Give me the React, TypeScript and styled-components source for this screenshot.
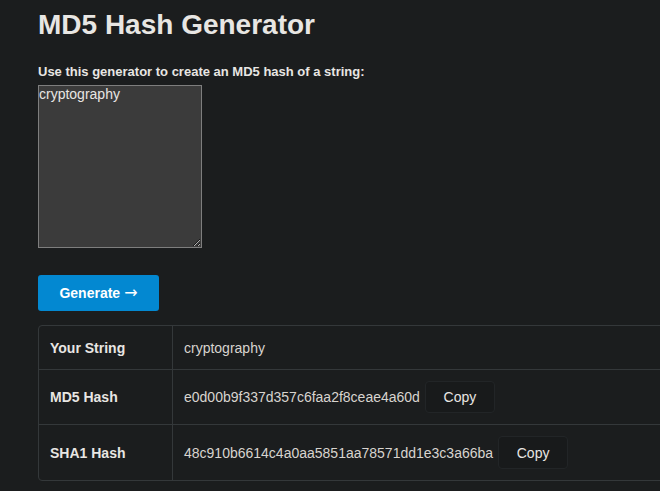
import React from "react";
import styled, { createGlobalStyle } from "styled-components";

const Global = createGlobalStyle`
  html, body {
    margin: 0;
    padding: 0;
    background: #1b1d1e;
    color: #e8e6e3;
    font-family: "Liberation Sans", Arial, Helvetica, sans-serif;
    overflow: hidden;
  }
`;

const Page = styled.main`
  padding: 0 0 0 38px;
  overflow: hidden;
  height: 491px;
`;

const Title = styled.h1`
  margin: 9px 0 0;
  font-size: 28px;
  line-height: 32px;
  font-weight: 700;
  color: #e8e6e3;
`;

const Label = styled.label`
  display: block;
  margin-top: 23px;
  font-size: 13px;
  line-height: 15px;
  font-weight: 700;
  color: #e8e6e3;
`;

const Input = styled.textarea`
  display: block;
  box-sizing: border-box;
  margin-top: 6px;
  width: 164px;
  height: 163px;
  padding: 0;
  background: #3b3b3b;
  border: 1px solid #7e7e7e;
  border-radius: 0;
  color: #e8e6e3;
  font-family: "Liberation Sans", Arial, sans-serif;
  font-size: 14px;
  line-height: 16px;
  outline: none;
`;

const GenerateButton = styled.button`
  display: flex;
  align-items: center;
  justify-content: center;
  gap: 4px;
  box-sizing: border-box;
  margin-top: 27px;
  width: 121px;
  height: 36px;
  padding: 0;
  background: #0388d1;
  color: #ffffff;
  border: none;
  border-radius: 3px;
  font-family: "Liberation Sans", Arial, sans-serif;
  font-size: 14px;
  font-weight: 700;
`;

const Arrow = styled.span`
  font-family: "DejaVu Sans", sans-serif;
  font-weight: 400;
  font-size: 16px;
  line-height: 1;
`;

const Table = styled.table`
  margin-top: 14px;
  width: 660px;
  border-collapse: separate;
  border-spacing: 0;
  border: 1px solid #34383a;
  border-radius: 4px;
  font-size: 14px;
`;

const Head = styled.th<{ $h: number; $first?: boolean }>`
  box-sizing: border-box;
  width: 134px;
  text-align: left;
  font-weight: 700;
  padding: 0 12px 0 11px;
  height: ${(p) => p.$h}px;
  border-right: 1px solid #34383a;
  border-top: ${(p) => (p.$first ? "none" : "1px solid #34383a")};
  color: #e8e6e3;
`;

const Cell = styled.td<{ $first?: boolean }>`
  padding: 0 11px;
  border-top: ${(p) => (p.$first ? "none" : "1px solid #34383a")};
  color: #d8d4cf;
`;

const CellInner = styled.div`
  display: flex;
  align-items: center;
  gap: 5px;
`;

const CopyButton = styled.button<{ $h: number }>`
  box-sizing: border-box;
  height: ${(p) => p.$h}px;
  width: 70px;
  background: #181a1b;
  border: 1px solid #222527;
  border-radius: 4px;
  color: #e8e6e3;
  font-family: "Liberation Sans", Arial, sans-serif;
  font-size: 14px;
  padding: 0;
`;

export default function App() {
  return (
    <>
      <Global />
      <Page>
        <Title>MD5 Hash Generator</Title>
        <Label htmlFor="src">Use this generator to create an MD5 hash of a string:</Label>
        <Input id="src" defaultValue="cryptography" />
        <GenerateButton>
          Generate <Arrow>→</Arrow>
        </GenerateButton>
        <Table>
          <tbody>
            <tr>
              <Head $h={43} $first>Your String</Head>
              <Cell $first>cryptography</Cell>
            </tr>
            <tr>
              <Head $h={55}>MD5 Hash</Head>
              <Cell>
                <CellInner>
                  e0d00b9f337d357c6faa2f8ceae4a60d
                  <CopyButton $h={32}>Copy</CopyButton>
                </CellInner>
              </Cell>
            </tr>
            <tr>
              <Head $h={56}>SHA1 Hash</Head>
              <Cell>
                <CellInner>
                  48c910b6614c4a0aa5851aa78571dd1e3c3a66ba
                  <CopyButton $h={33}>Copy</CopyButton>
                </CellInner>
              </Cell>
            </tr>
          </tbody>
        </Table>
      </Page>
    </>
  );
}
